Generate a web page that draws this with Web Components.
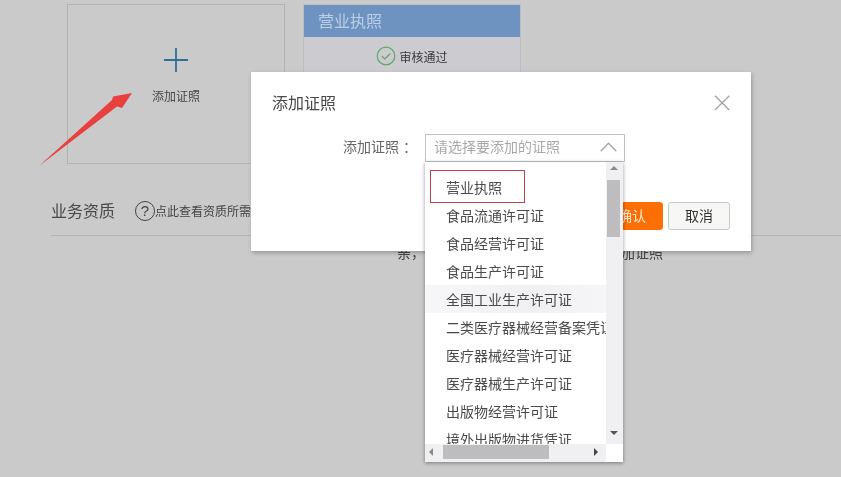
<!DOCTYPE html>
<html lang="zh"><head><meta charset="utf-8"><title>添加证照</title>
<style>
html,body{margin:0;padding:0;height:100%;overflow:hidden}
body{background:#cbcacb;font-family:"Noto Sans CJK SC","Liberation Sans",sans-serif;color:#333;width:841px;height:477px;position:relative;filter:blur(.3px)}
</style></head><body>
<cert-page>
  <add-card slot="cards">添加证照</add-card>
  <license-card slot="cards" name="营业执照" status="审核通过"></license-card>
  <span slot="title">业务资质</span>
  <span slot="hint">点此查看资质所需</span>
  <span slot="empty">亲，您还没有业务资质，点击上方添加证照</span>
</cert-page>
<arrow-mark></arrow-mark>
<cert-modal heading="添加证照">
  <cert-select label="添加证照" placeholder="请选择要添加的证照"></cert-select>
</cert-modal>
<script>
function def(name,html,setup){
  customElements.define(name,class extends HTMLElement{
    constructor(){super();this.attachShadow({mode:'open'}).innerHTML=typeof html==='function'?html(this):html;}
    connectedCallback(){
      if(typeof html==='function')this.shadowRoot.innerHTML=html(this);
      if(setup)setup(this);
    }
  });
}
def('cert-page',`<style>
:host{display:block;padding:4px 0 0 51px}
.cards{display:flex;gap:18px;padding-left:16px;height:160px}
.sec{display:flex;align-items:flex-start;margin-top:32px;height:39px;border-bottom:1px solid #b4b4b4;color:#484848}
.t{font-size:16px;width:84px;line-height:20px;margin-top:4px}
.q{box-sizing:border-box;width:20px;height:20px;margin-top:5px;border:1px solid #444;border-radius:50%;font:15px/18px "Liberation Sans",sans-serif;text-align:center;color:#444}
.h{font-size:12px;color:#444;line-height:20px;margin-top:5px}
.e{font-size:14px;color:#444;margin:6px 0 0 346px;line-height:20px;white-space:nowrap}
</style>
<div class="cards"><slot name="cards"></slot></div>
<div class="sec"><div class="t"><slot name="title"></slot></div><div class="q">?</div><div class="h"><slot name="hint"></slot></div></div>
<div class="e"><slot name="empty"></slot></div>`);
def('add-card',`<style>
:host{box-sizing:border-box;display:flex;flex-direction:column;align-items:center;width:218px;height:160px;border:1px solid #b3b3b3;font-size:12px;color:#484848}
svg{display:block;margin-top:42px;margin-bottom:14px}
</style><svg width="26" height="26" viewBox="0 0 26 26"><path d="M13 1v24M1 13h24" stroke="#2f7096" stroke-width="1.8" fill="none"/></svg><slot></slot>`);
def('license-card',h=>`<style>
:host{box-sizing:border-box;display:block;width:218px;height:160px;border:1px solid #bdbdc2;background:#cbcbd0}
.h{height:32px;background:#6e93c1;color:#bccee4;font-size:16px;line-height:30px;padding-left:14px}
.b{display:flex;align-items:center;justify-content:center;gap:3px;height:38px;font-size:12px;color:#3a3a3a;padding-right:1px}
.b svg{margin-left:1px}
</style><div class="h">${h.getAttribute('name')||''}</div>
<div class="b"><svg width="20" height="20" viewBox="0 0 20 20"><circle cx="10" cy="10" r="8.8" fill="none" stroke="#5fa868" stroke-width="1.2"/><path d="M5.8 10l3 3 5.5-5.5" fill="none" stroke="#5fa868" stroke-width="1.2"/></svg><span>${h.getAttribute('status')||''}</span></div>`);
def('arrow-mark',`<style>:host{position:absolute;left:0;top:0;width:160px;height:180px;display:block}</style>
<svg width="160" height="180" viewBox="0 0 160 180"><polygon points="39,166 112,100 113,96.5 132,93 122,108 117,106.5" fill="#e8403f"/></svg>`);
def('cert-modal',h=>`<style>
:host{position:absolute;left:251px;top:72px;width:500px;height:179px;background:#fff;display:block;box-shadow:1px 2px 4px rgba(0,0,0,.25)}
.head{display:flex;justify-content:space-between;align-items:center;padding:19px 21px 1px 21px;height:22px;font-size:16px;color:#484848}
.head svg{margin-top:2px}
.body{padding:20px 0 0 92px}
.foot{position:absolute;right:21px;top:130px;display:flex;gap:5px}
.btn{box-sizing:border-box;width:62px;height:28px;border-radius:3px;font-size:14px;line-height:25px;text-align:center}
.ok{background:#fb6f04;color:#ffe9d4;border:1px solid #fb6f04}
.no{background:#f7f8f6;color:#333;border:1px solid #c3c9c9}
</style><div class="head"><span>${h.getAttribute('heading')||''}</span>
<svg width="16" height="16" viewBox="0 0 16 16"><path d="M1 .7l14.3 14.3M15.3.7L1 15" stroke="#a3a3a3" stroke-width="1.3" fill="none"/></svg></div>
<div class="body"><slot></slot></div>
<div class="foot"><div class="btn ok">确认</div><div class="btn no">取消</div></div>`);
const items=['营业执照','食品流通许可证','食品经营许可证','食品生产许可证','全国工业生产许可证','二类医疗器械经营备案凭证','医疗器械经营许可证','医疗器械生产许可证','出版物经营许可证','境外出版物进货凭证'];
def('cert-select',h=>`<style>
:host{display:flex;align-items:center;font-size:14px;color:#666;position:relative;z-index:2}
.l{width:82px;white-space:nowrap;margin-bottom:4px}
.l i{font-style:normal;font-family:"Noto Sans CJK TC",sans-serif;padding-left:4px}
.box{box-sizing:border-box;width:200px;height:28px;border:1px solid #bfc3c3;background:#fff;display:flex;align-items:center;justify-content:space-between;padding:0 7px 0 8px;color:#a8a8a8}
.box span{margin-bottom:4px}
.box svg{margin-bottom:2px}
.dd{position:absolute;left:82px;top:28px;width:198px;height:300px;background:#fff;box-shadow:0 1px 4px rgba(0,0,0,.4);display:grid;grid-template-columns:181px 17px;grid-template-rows:282px 18px;font-size:14px;color:#4a4a4a}
.list{overflow:hidden;padding-top:11px;box-sizing:border-box}
.it{height:28px;line-height:28px;padding-left:21px;white-space:nowrap;position:relative}
.it.hv{background:linear-gradient(90deg,#f7f7f9,#f0f0f3 60%,#f6f6f8)}
.it.sel::after{content:"";position:absolute;left:5px;top:-3px;width:95px;height:33px;box-sizing:border-box;border:1px solid #b5444c}
.sv{background:#f0eff2;position:relative}
.th{position:absolute;left:1px;top:18px;width:13px;height:57px;background:#bdbcbf}
.hz{background:#f0eff2;position:relative}
.tx{position:absolute;left:18px;top:1px;width:106px;height:14px;background:#bdbcbf}
.ar{position:absolute;width:0;height:0;border:4px solid transparent}
.cn{background:#fff}
</style>
<span class="l">${h.getAttribute('label')||''}<i>：</i></span>
<div class="box"><span>${h.getAttribute('placeholder')||''}</span>
<svg width="17" height="10" viewBox="0 0 17 10"><path d="M.7 9.3L8.5 1.2l7.8 8.1" fill="none" stroke="#a6a6a6" stroke-width="1.3"/></svg></div>
<div class="dd"><div class="list">${items.map((t,i)=>`<div class="it${i==0?' sel':''}${i==4?' hv':''}">${t}</div>`).join('')}</div>
<div class="sv"><div class="ar" style="left:4px;top:4px;border-top:0;border-bottom-color:#8a8a8c"></div><div class="th"></div><div class="ar" style="left:4px;top:269px;border-bottom:0;border-top-color:#555"></div></div>
<div class="hz"><div class="ar" style="left:4px;top:4px;border-left:0;border-right-color:#8a8a8c"></div><div class="tx"></div><div class="ar" style="left:169px;top:4px;border-right:0;border-left-color:#444"></div></div>
<div class="cn"></div></div>`);
</script>
</body></html>
